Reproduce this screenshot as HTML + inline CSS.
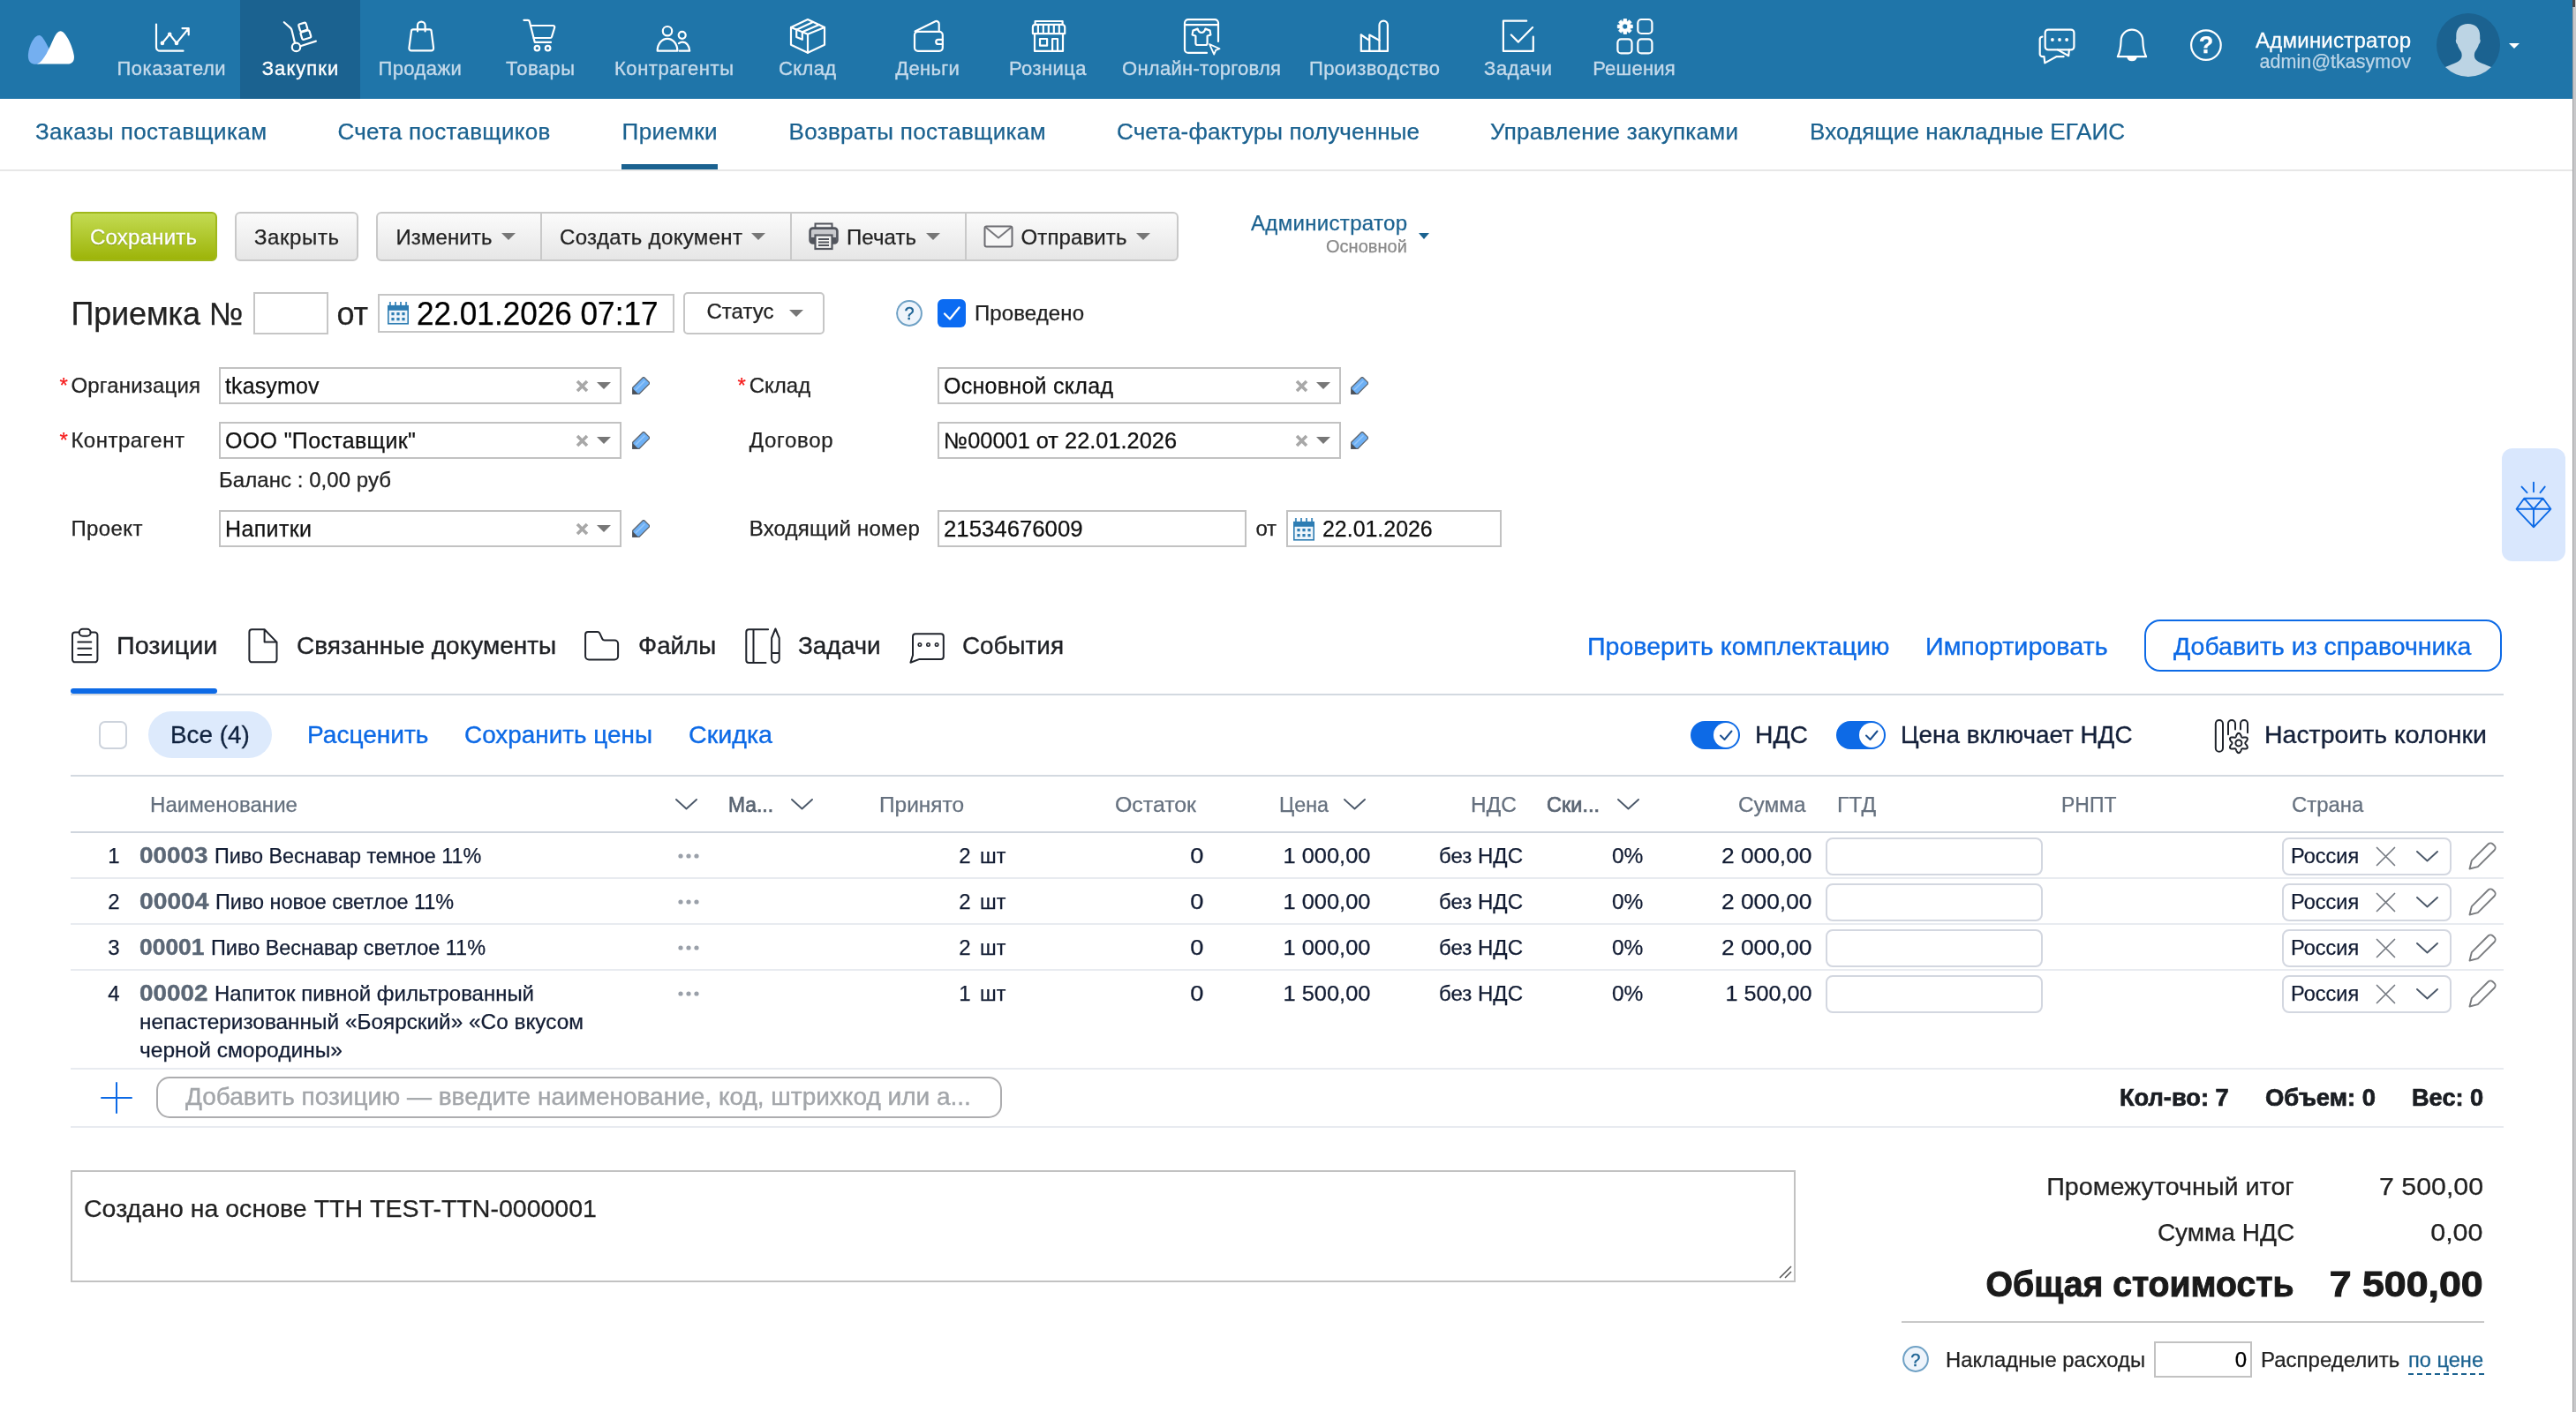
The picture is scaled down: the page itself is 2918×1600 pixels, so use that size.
<!DOCTYPE html>
<html lang="ru"><head><meta charset="utf-8"><title>Приемка</title><style>
html,body{margin:0;padding:0;background:#fff;}
body{width:2918px;height:1600px;position:relative;overflow:hidden;font-family:'Liberation Sans',sans-serif;will-change:transform;}
.t{position:absolute;white-space:nowrap;line-height:1;-webkit-text-stroke:0.25px currentColor;}
</style></head><body>
<div style="position:absolute;left:0px;top:0px;width:2914px;height:112px;background:#1f75a9;"></div>
<div style="position:absolute;left:272px;top:0px;width:136px;height:112px;background:#1b6290;"></div>
<div style="position:absolute;left:2914px;top:0px;width:4px;height:1600px;background:#c8c8ca;"></div>
<div style="position:absolute;left:2914px;top:0px;width:1px;height:1600px;background:#a2a2a4;"></div>
<div style="position:absolute;left:2914px;top:0px;width:3px;height:8px;background:#4a4a4c;"></div>
<svg style="position:absolute;left:0px;top:0px;" width="120" height="112" viewBox="0 0 120 112" fill="none"><path d="M44.400 39.900C47.500 39.900 50.500 45.500 55.300 54.700L56 60L44 72.600C36 73.800 31.500 70.500 31.900 62.400C32.500 52 38.500 39.900 44.400 39.900Z" fill="#74aff0"/><path d="M42 72.600C50 69.500 56 54 60.800 43.700C63.500 38 66 35.200 68.600 35.200C74 35.200 82.500 52 83.900 63.200C84.500 69.500 81.500 72.600 76.500 72.600Z" fill="#fff"/></svg>
<span class="t" style="top:67.0px;font-size:22px;color:#c5daeb;letter-spacing:0.51px;left:132.5px;-webkit-text-stroke:0.35px currentColor;">Показатели</span>
<span class="t" style="top:67.0px;font-size:22px;color:#fff;letter-spacing:1.04px;left:296.8px;-webkit-text-stroke:0.35px currentColor;">Закупки</span>
<span class="t" style="top:67.0px;font-size:22px;color:#c5daeb;letter-spacing:0.43px;left:428.4px;-webkit-text-stroke:0.35px currentColor;">Продажи</span>
<span class="t" style="top:67.0px;font-size:22px;color:#c5daeb;letter-spacing:0.46px;left:573.0px;-webkit-text-stroke:0.35px currentColor;">Товары</span>
<span class="t" style="top:67.0px;font-size:22px;color:#c5daeb;letter-spacing:0.54px;left:696.0px;-webkit-text-stroke:0.35px currentColor;">Контрагенты</span>
<span class="t" style="top:67.0px;font-size:22px;color:#c5daeb;letter-spacing:0.33px;left:882.1px;-webkit-text-stroke:0.35px currentColor;">Склад</span>
<span class="t" style="top:67.0px;font-size:22px;color:#c5daeb;letter-spacing:0.31px;left:1014.2px;-webkit-text-stroke:0.35px currentColor;">Деньги</span>
<span class="t" style="top:67.0px;font-size:22px;color:#c5daeb;letter-spacing:0.42px;left:1142.9px;-webkit-text-stroke:0.35px currentColor;">Розница</span>
<span class="t" style="top:67.0px;font-size:22px;color:#c5daeb;letter-spacing:0.28px;left:1271.0px;-webkit-text-stroke:0.35px currentColor;">Онлайн-торговля</span>
<span class="t" style="top:67.0px;font-size:22px;color:#c5daeb;letter-spacing:0.41px;left:1483.0px;-webkit-text-stroke:0.35px currentColor;">Производство</span>
<span class="t" style="top:67.0px;font-size:22px;color:#c5daeb;letter-spacing:0.62px;left:1681.0px;-webkit-text-stroke:0.35px currentColor;">Задачи</span>
<span class="t" style="top:67.0px;font-size:22px;color:#c5daeb;letter-spacing:0.22px;left:1804.2px;-webkit-text-stroke:0.35px currentColor;">Решения</span>
<span class="t" style="top:33.7px;font-size:24px;color:#fff;letter-spacing:0.24px;left:2555.0px;-webkit-text-stroke:0.3px #fff;">Администратор</span>
<span class="t" style="top:60.0px;font-size:21.5px;color:#bdd6e8;letter-spacing:0.02px;right:187.0px;">admin@tkasymov</span>
<svg style="position:absolute;left:2760px;top:15px;" width="72" height="72" viewBox="0 0 72 72" fill="none"><defs><clipPath id="avc"><circle cx="36" cy="36" r="36"/></clipPath></defs><circle cx="36" cy="36" r="36" fill="#1b6290"/><g clip-path="url(#avc)" fill="#bcd4e4"><path d="M35.600 11.900C27.500 11.900 22.300 17 22.300 25L22.300 29.500C21.400 30 21.700 33.600 23.500 35C24.500 39 26.500 41.500 28 44C29 47 29 50 27 52.500C24 56 17 58 8 61.800L8 76L64 76L64 61.800C55 58 47.500 56 44.500 52.500C42.500 50 42.500 47 43.500 44C45 41.500 47 39 48 35C49.800 33.600 50.100 30 49.200 29.500L49.200 25C49.200 17 44 11.900 35.600 11.900Z"/></g></svg>
<svg style="position:absolute;left:2842px;top:49px;" width="12" height="6" viewBox="0 0 12 6" fill="none"><path d="M0 0h12L6 6z" fill="#fff"/></svg>
<div style="position:absolute;left:0px;top:192px;width:2914px;height:2px;background:#e7e7e7;"></div>
<span class="t" style="top:136.4px;font-size:26px;color:#1b6290;letter-spacing:0.37px;left:40.0px;">Заказы поставщикам</span>
<span class="t" style="top:136.4px;font-size:26px;color:#1b6290;letter-spacing:0.30px;left:382.4px;">Счета поставщиков</span>
<span class="t" style="top:136.4px;font-size:26px;color:#1b6290;letter-spacing:0.35px;left:704.6px;">Приемки</span>
<span class="t" style="top:136.4px;font-size:26px;color:#1b6290;letter-spacing:0.31px;left:893.6px;">Возвраты поставщикам</span>
<span class="t" style="top:136.4px;font-size:26px;color:#1b6290;letter-spacing:0.17px;left:1265.0px;">Счета-фактуры полученные</span>
<span class="t" style="top:136.4px;font-size:26px;color:#1b6290;letter-spacing:0.28px;left:1688.0px;">Управление закупками</span>
<span class="t" style="top:136.4px;font-size:26px;color:#1b6290;letter-spacing:0.09px;left:2050.0px;">Входящие накладные ЕГАИС</span>
<div style="position:absolute;left:704px;top:186px;width:109px;height:6px;background:#1b6290;"></div>
<div style="position:absolute;left:80px;top:240px;width:166px;height:56px;background:linear-gradient(#c3db52,#9db409);border:2px solid #a0b81c;box-sizing:border-box;border-radius:6px;"></div>
<span class="t" style="top:256.9px;font-size:24px;color:#fff;letter-spacing:0.22px;left:102.0px;text-shadow:0 1px 1px rgba(90,110,0,.55);-webkit-text-stroke:0.3px #fff;">Сохранить</span>
<div style="position:absolute;left:266px;top:240px;width:140px;height:56px;background:linear-gradient(#fbfbfb,#e6e6e6);border:2px solid #c9c9c9;box-sizing:border-box;border-radius:6px;"></div>
<span class="t" style="top:256.9px;font-size:24px;color:#222;letter-spacing:0.59px;left:288.0px;">Закрыть</span>
<div style="position:absolute;left:426px;top:240px;width:909px;height:56px;background:linear-gradient(#fbfbfb,#e6e6e6);border:2px solid #c9c9c9;box-sizing:border-box;border-radius:6px;"></div>
<div style="position:absolute;left:612px;top:242px;width:2px;height:52px;background:#c9c9c9;"></div>
<div style="position:absolute;left:895px;top:242px;width:2px;height:52px;background:#c9c9c9;"></div>
<div style="position:absolute;left:1093px;top:242px;width:2px;height:52px;background:#c9c9c9;"></div>
<span class="t" style="top:256.9px;font-size:24px;color:#222;letter-spacing:0.10px;left:448.5px;">Изменить</span>
<svg style="position:absolute;left:568px;top:264px;" width="16" height="8" viewBox="0 0 16 8" fill="none"><path d="M0 0h16L8.0 8z" fill="#777"/></svg>
<span class="t" style="top:256.9px;font-size:24px;color:#222;letter-spacing:0.34px;left:634.0px;">Создать документ</span>
<svg style="position:absolute;left:851px;top:264px;" width="16" height="8" viewBox="0 0 16 8" fill="none"><path d="M0 0h16L8.0 8z" fill="#777"/></svg>
<span class="t" style="top:256.9px;font-size:24px;color:#222;letter-spacing:0.07px;left:959.0px;">Печать</span>
<svg style="position:absolute;left:1049px;top:264px;" width="16" height="8" viewBox="0 0 16 8" fill="none"><path d="M0 0h16L8.0 8z" fill="#777"/></svg>
<span class="t" style="top:256.9px;font-size:24px;color:#222;letter-spacing:0.12px;left:1156.5px;">Отправить</span>
<svg style="position:absolute;left:1287px;top:264px;" width="16" height="8" viewBox="0 0 16 8" fill="none"><path d="M0 0h16L8.0 8z" fill="#777"/></svg>
<span class="t" style="top:240.7px;font-size:24px;color:#1b6290;letter-spacing:0.32px;left:1417.0px;">Администратор</span>
<span class="t" style="top:269.1px;font-size:20px;color:#8a8a8a;letter-spacing:0.04px;right:1324.0px;">Основной</span>
<svg style="position:absolute;left:1607px;top:264px;" width="12" height="7" viewBox="0 0 12 7" fill="none"><path d="M0 0h12L6 7z" fill="#1b6290"/></svg>
<span class="t" style="top:338.0px;font-size:36px;color:#222;letter-spacing:-0.12px;left:80.4px;">Приемка №</span>
<div style="position:absolute;left:287px;top:331px;width:85px;height:48px;border:2px solid #c6c6c6;box-sizing:border-box;background:#fff;"></div>
<span class="t" style="top:338.0px;font-size:36px;color:#222;letter-spacing:-0.22px;left:381.6px;">от</span>
<div style="position:absolute;left:428px;top:333px;width:336px;height:44px;border:2px solid #c6c6c6;box-sizing:border-box;background:#fff;"></div>
<span class="t" style="top:337.2px;font-size:37px;color:#000;left:472.4px;transform:scaleX(0.9494);transform-origin:0 0;">22.01.2026 07:17</span>
<div style="position:absolute;left:774px;top:331px;width:160px;height:48px;border:2px solid #c6c6c6;box-sizing:border-box;background:#fff;border-radius:5px;"></div>
<span class="t" style="top:341.2px;font-size:24px;color:#222;letter-spacing:0.03px;left:800.5px;">Статус</span>
<svg style="position:absolute;left:894px;top:351px;" width="16" height="8" viewBox="0 0 16 8" fill="none"><path d="M0 0h16L8.0 8z" fill="#777"/></svg>
<div style="position:absolute;left:1062px;top:339px;width:32px;height:32px;background:#0b6bf2;border-radius:6px;"></div>
<svg style="position:absolute;left:1062px;top:339px;" width="32" height="32" viewBox="0 0 32 32" fill="none"><path d="M8 16.5l6 6L24.5 9.5" stroke="#fff" stroke-width="2.3" stroke-linecap="round" stroke-linejoin="round"/></svg>
<span class="t" style="top:342.9px;font-size:24px;color:#222;letter-spacing:0.10px;left:1104.0px;">Проведено</span>
<span class="t" style="top:425.3px;font-size:24px;color:#f61b1b;left:67.6px;">*</span>
<span class="t" style="top:425.1px;font-size:24px;color:#222;letter-spacing:0.19px;left:80.4px;">Организация</span>
<span class="t" style="top:487.3px;font-size:24px;color:#f61b1b;left:67.6px;">*</span>
<span class="t" style="top:487.1px;font-size:24px;color:#222;letter-spacing:0.49px;left:80.4px;">Контрагент</span>
<span class="t" style="top:587.2px;font-size:24px;color:#222;letter-spacing:0.39px;left:80.4px;">Проект</span>
<div style="position:absolute;left:248px;top:416px;width:456px;height:42px;border:2px solid #c2c2c2;box-sizing:border-box;background:#fff;"></div>
<span class="t" style="top:425.0px;font-size:25px;color:#111;letter-spacing:0.13px;left:255.0px;">tkasymov</span>
<svg style="position:absolute;left:651.5px;top:429.5px;" width="15" height="15" viewBox="0 0 15 15" fill="none"><path d="M2 2l11 11M13 2L2 13" stroke="#a8a8a8" stroke-width="3.6"/></svg>
<svg style="position:absolute;left:676px;top:433px;" width="16" height="8" viewBox="0 0 16 8" fill="none"><path d="M0 0h16L8 8z" fill="#777"/></svg>
<div style="position:absolute;left:248px;top:478px;width:456px;height:42px;border:2px solid #c2c2c2;box-sizing:border-box;background:#fff;"></div>
<span class="t" style="top:487.0px;font-size:25px;color:#111;letter-spacing:0.34px;left:255.0px;">ООО &quot;Поставщик&quot;</span>
<svg style="position:absolute;left:651.5px;top:491.5px;" width="15" height="15" viewBox="0 0 15 15" fill="none"><path d="M2 2l11 11M13 2L2 13" stroke="#a8a8a8" stroke-width="3.6"/></svg>
<svg style="position:absolute;left:676px;top:495px;" width="16" height="8" viewBox="0 0 16 8" fill="none"><path d="M0 0h16L8 8z" fill="#777"/></svg>
<div style="position:absolute;left:248px;top:578px;width:456px;height:42px;border:2px solid #c2c2c2;box-sizing:border-box;background:#fff;"></div>
<span class="t" style="top:587.0px;font-size:25px;color:#111;letter-spacing:0.36px;left:255.0px;">Напитки</span>
<svg style="position:absolute;left:651.5px;top:591.5px;" width="15" height="15" viewBox="0 0 15 15" fill="none"><path d="M2 2l11 11M13 2L2 13" stroke="#a8a8a8" stroke-width="3.6"/></svg>
<svg style="position:absolute;left:676px;top:595px;" width="16" height="8" viewBox="0 0 16 8" fill="none"><path d="M0 0h16L8 8z" fill="#777"/></svg>
<span class="t" style="top:532.3px;font-size:24px;color:#222;letter-spacing:0.05px;left:248.0px;">Баланс : 0,00 руб</span>
<span class="t" style="top:425.3px;font-size:24px;color:#f61b1b;left:835.6px;">*</span>
<span class="t" style="top:425.1px;font-size:24px;color:#222;letter-spacing:0.01px;left:848.7px;">Склад</span>
<span class="t" style="top:487.1px;font-size:24px;color:#222;letter-spacing:0.73px;left:848.7px;">Договор</span>
<span class="t" style="top:587.2px;font-size:24px;color:#222;letter-spacing:0.21px;left:848.7px;">Входящий номер</span>
<div style="position:absolute;left:1062px;top:416px;width:457px;height:42px;border:2px solid #c2c2c2;box-sizing:border-box;background:#fff;"></div>
<span class="t" style="top:425.0px;font-size:25px;color:#111;letter-spacing:0.28px;left:1069.0px;">Основной склад</span>
<svg style="position:absolute;left:1466.5px;top:429.5px;" width="15" height="15" viewBox="0 0 15 15" fill="none"><path d="M2 2l11 11M13 2L2 13" stroke="#a8a8a8" stroke-width="3.6"/></svg>
<svg style="position:absolute;left:1491px;top:433px;" width="16" height="8" viewBox="0 0 16 8" fill="none"><path d="M0 0h16L8 8z" fill="#777"/></svg>
<div style="position:absolute;left:1062px;top:478px;width:457px;height:42px;border:2px solid #c2c2c2;box-sizing:border-box;background:#fff;"></div>
<span class="t" style="top:487.0px;font-size:25px;color:#111;left:1069.0px;transform:scaleX(1.0148);transform-origin:0 0;">№00001 от 22.01.2026</span>
<svg style="position:absolute;left:1466.5px;top:491.5px;" width="15" height="15" viewBox="0 0 15 15" fill="none"><path d="M2 2l11 11M13 2L2 13" stroke="#a8a8a8" stroke-width="3.6"/></svg>
<svg style="position:absolute;left:1491px;top:495px;" width="16" height="8" viewBox="0 0 16 8" fill="none"><path d="M0 0h16L8 8z" fill="#777"/></svg>
<div style="position:absolute;left:1062px;top:578px;width:350px;height:42px;border:2px solid #c2c2c2;box-sizing:border-box;background:#fff;"></div>
<span class="t" style="top:587.0px;font-size:25px;color:#111;left:1069.4px;transform:scaleX(1.0304);transform-origin:0 0;">21534676009</span>
<span class="t" style="top:587.2px;font-size:24px;color:#222;letter-spacing:-0.31px;left:1422.5px;">от</span>
<div style="position:absolute;left:1457px;top:578px;width:244px;height:42px;border:2px solid #c2c2c2;box-sizing:border-box;background:#fff;"></div>
<span class="t" style="top:587.0px;font-size:25px;color:#111;left:1497.7px;transform:scaleX(0.9966);transform-origin:0 0;">22.01.2026</span>
<div style="position:absolute;left:80px;top:786px;width:2756px;height:2px;background:#d3d9e0;"></div>
<div style="position:absolute;left:80px;top:780px;width:166px;height:6px;background:#0d6ae6;border-radius:3px;"></div>
<span class="t" style="top:717.9px;font-size:28px;color:#1f2125;left:132.0px;transform:scaleX(1.0280);transform-origin:0 0;-webkit-text-stroke:0.35px currentColor;">Позиции</span>
<span class="t" style="top:717.9px;font-size:28px;color:#1f2125;left:335.6px;transform:scaleX(1.0001);transform-origin:0 0;-webkit-text-stroke:0.35px currentColor;">Связанные документы</span>
<span class="t" style="top:717.9px;font-size:28px;color:#1f2125;left:722.7px;transform:scaleX(0.9925);transform-origin:0 0;-webkit-text-stroke:0.35px currentColor;">Файлы</span>
<span class="t" style="top:717.9px;font-size:28px;color:#1f2125;left:904.0px;transform:scaleX(0.9966);transform-origin:0 0;-webkit-text-stroke:0.35px currentColor;">Задачи</span>
<span class="t" style="top:717.9px;font-size:28px;color:#1f2125;left:1090.0px;transform:scaleX(0.9949);transform-origin:0 0;-webkit-text-stroke:0.35px currentColor;">События</span>
<span class="t" style="top:718.6px;font-size:28px;color:#0d6ae6;left:1798.3px;transform:scaleX(1.0203);transform-origin:0 0;-webkit-text-stroke:0.35px currentColor;">Проверить комплектацию</span>
<span class="t" style="top:718.6px;font-size:28px;color:#0d6ae6;left:2181.3px;transform:scaleX(1.0252);transform-origin:0 0;-webkit-text-stroke:0.35px currentColor;">Импортировать</span>
<div style="position:absolute;left:2429px;top:702px;width:405px;height:59px;border:2px solid #0d6ae6;border-radius:18px;box-sizing:border-box;"></div>
<span class="t" style="top:718.6px;font-size:28px;color:#0d6ae6;left:2462.0px;transform:scaleX(1.0168);transform-origin:0 0;-webkit-text-stroke:0.35px currentColor;">Добавить из справочника</span>
<div style="position:absolute;left:112px;top:817px;width:32px;height:32px;border:2px solid #cdd3dc;border-radius:7px;box-sizing:border-box;background:#fff;"></div>
<div style="position:absolute;left:168px;top:806px;width:140px;height:53px;background:#ddeafc;border-radius:27px;"></div>
<span class="t" style="top:818.9px;font-size:28px;color:#10233f;left:192.8px;transform:scaleX(0.9950);transform-origin:0 0;-webkit-text-stroke:0.35px currentColor;">Все (4)</span>
<span class="t" style="top:818.9px;font-size:28px;color:#0d6ae6;left:348.0px;transform:scaleX(1.0026);transform-origin:0 0;-webkit-text-stroke:0.35px currentColor;">Расценить</span>
<span class="t" style="top:818.9px;font-size:28px;color:#0d6ae6;left:526.0px;transform:scaleX(0.9962);transform-origin:0 0;-webkit-text-stroke:0.35px currentColor;">Сохранить цены</span>
<span class="t" style="top:818.9px;font-size:28px;color:#0d6ae6;left:779.7px;transform:scaleX(1.0227);transform-origin:0 0;-webkit-text-stroke:0.35px currentColor;">Скидка</span>
<div style="position:absolute;left:1915px;top:817px;width:56px;height:32px;background:#0d6ae6;border-radius:16px;"></div><div style="position:absolute;left:1941px;top:819px;width:28px;height:28px;background:#fff;border-radius:14px;"></div><svg style="position:absolute;left:1941px;top:819px;" width="28" height="28" viewBox="0 0 28 28" fill="none"><path d="M8 14.5l4.5 4.5L20.5 9.5" stroke="#1b4f8f" stroke-width="2" stroke-linecap="round" stroke-linejoin="round"/></svg>
<span class="t" style="top:819.1px;font-size:28px;color:#14203a;left:1987.5px;transform:scaleX(1.0100);transform-origin:0 0;-webkit-text-stroke:0.35px currentColor;">НДС</span>
<div style="position:absolute;left:2080px;top:817px;width:56px;height:32px;background:#0d6ae6;border-radius:16px;"></div><div style="position:absolute;left:2106px;top:819px;width:28px;height:28px;background:#fff;border-radius:14px;"></div><svg style="position:absolute;left:2106px;top:819px;" width="28" height="28" viewBox="0 0 28 28" fill="none"><path d="M8 14.5l4.5 4.5L20.5 9.5" stroke="#1b4f8f" stroke-width="2" stroke-linecap="round" stroke-linejoin="round"/></svg>
<span class="t" style="top:819.1px;font-size:28px;color:#14203a;left:2152.5px;transform:scaleX(0.9940);transform-origin:0 0;-webkit-text-stroke:0.35px currentColor;">Цена включает НДС</span>
<span class="t" style="top:819.1px;font-size:28px;color:#14203a;left:2565.0px;transform:scaleX(1.0165);transform-origin:0 0;-webkit-text-stroke:0.35px currentColor;">Настроить колонки</span>
<div style="position:absolute;left:80px;top:878px;width:2756px;height:2px;background:#d3d9e0;"></div>
<span class="t" style="top:900.9px;font-size:23px;color:#66717f;left:170.0px;transform:scaleX(1.0473);transform-origin:0 0;">Наименование</span>
<svg style="position:absolute;left:765px;top:905px;" width="25" height="13" viewBox="0 0 25 13" fill="none"><path d="M1 1l11.5 10.5L24 1" stroke="#4b5869" stroke-width="1.9" stroke-linecap="round" stroke-linejoin="round"/></svg>
<span class="t" style="top:900.9px;font-size:23px;color:#5a6573;left:824.6px;transform:scaleX(0.9924);transform-origin:0 0;-webkit-text-stroke:0.7px #5a6573;">Ма...</span>
<svg style="position:absolute;left:895.5px;top:905px;" width="25" height="13" viewBox="0 0 25 13" fill="none"><path d="M1 1l11.5 10.5L24 1" stroke="#4b5869" stroke-width="1.9" stroke-linecap="round" stroke-linejoin="round"/></svg>
<span class="t" style="top:900.9px;font-size:23px;color:#66717f;left:996.0px;transform:scaleX(1.0619);transform-origin:0 0;">Принято</span>
<span class="t" style="top:900.9px;font-size:23px;color:#66717f;left:1262.7px;transform:scaleX(1.0812);transform-origin:0 0;">Остаток</span>
<span class="t" style="top:900.9px;font-size:23px;color:#66717f;left:1449.0px;transform:scaleX(1.0124);transform-origin:0 0;">Цена</span>
<svg style="position:absolute;left:1521.5px;top:905px;" width="25" height="13" viewBox="0 0 25 13" fill="none"><path d="M1 1l11.5 10.5L24 1" stroke="#4b5869" stroke-width="1.9" stroke-linecap="round" stroke-linejoin="round"/></svg>
<span class="t" style="top:900.9px;font-size:23px;color:#66717f;left:1666.4px;transform:scaleX(1.0615);transform-origin:0 0;">НДС</span>
<span class="t" style="top:900.9px;font-size:23px;color:#5a6573;left:1752.4px;transform:scaleX(1.0221);transform-origin:0 0;-webkit-text-stroke:0.7px #5a6573;">Ски...</span>
<svg style="position:absolute;left:1832px;top:905px;" width="25" height="13" viewBox="0 0 25 13" fill="none"><path d="M1 1l11.5 10.5L24 1" stroke="#4b5869" stroke-width="1.9" stroke-linecap="round" stroke-linejoin="round"/></svg>
<span class="t" style="top:900.9px;font-size:23px;color:#66717f;left:1968.7px;transform:scaleX(1.0597);transform-origin:0 0;">Сумма</span>
<span class="t" style="top:900.9px;font-size:23px;color:#66717f;left:2080.6px;transform:scaleX(1.0695);transform-origin:0 0;">ГТД</span>
<span class="t" style="top:900.9px;font-size:23px;color:#66717f;left:2335.2px;transform:scaleX(0.9979);transform-origin:0 0;">РНПТ</span>
<span class="t" style="top:900.9px;font-size:23px;color:#66717f;left:2596.2px;transform:scaleX(1.0392);transform-origin:0 0;">Страна</span>
<div style="position:absolute;left:80px;top:942px;width:2756px;height:2px;background:#cfd5dd;"></div>
<span class="t" style="top:958.0px;font-size:24px;color:#121c33;right:2782.5px;">1</span>
<span class="t" style="top:957.1px;font-size:25px;color:#5b6776;font-weight:700;left:157.6px;transform:scaleX(1.1132);transform-origin:0 0;-webkit-text-stroke:0.4px #5b6776;">00003</span>
<span class="t" style="top:958.0px;font-size:24px;color:#121c33;left:242.6px;transform:scaleX(0.9742);transform-origin:0 0;">Пиво Веснавар темное 11%</span>
<svg style="position:absolute;left:768px;top:967.3px;" width="24" height="6" viewBox="0 0 24 6" fill="none"><circle cx="3" cy="3" r="2.6" fill="#9aa0a9"/><circle cx="12" cy="3" r="2.6" fill="#9aa0a9"/><circle cx="21" cy="3" r="2.6" fill="#9aa0a9"/></svg>
<span class="t" style="top:958.0px;font-size:24px;color:#121c33;right:1818.5px;">2</span>
<span class="t" style="top:958.0px;font-size:24px;color:#121c33;left:1109.7px;transform:scaleX(0.9686);transform-origin:0 0;">шт</span>
<span class="t" style="top:958.0px;font-size:24px;color:#121c33;right:1555.0px;transform:scaleX(1.1378);transform-origin:100% 0;">0</span>
<span class="t" style="top:958.0px;font-size:24px;color:#121c33;right:1366.0px;transform:scaleX(1.0597);transform-origin:100% 0;">1 000,00</span>
<span class="t" style="top:958.0px;font-size:24px;color:#121c33;left:1629.8px;transform:scaleX(1.0012);transform-origin:0 0;">без НДС</span>
<span class="t" style="top:958.0px;font-size:24px;color:#121c33;left:1826.0px;transform:scaleX(1.0205);transform-origin:0 0;">0%</span>
<span class="t" style="top:958.0px;font-size:24px;color:#121c33;right:865.7px;transform:scaleX(1.0972);transform-origin:100% 0;">2 000,00</span>
<div style="position:absolute;left:2067.5px;top:948.5px;width:246px;height:43px;border:2px solid #d3d7e0;border-radius:8px;box-sizing:border-box;background:#fff;"></div>
<div style="position:absolute;left:2584.5px;top:948.5px;width:192px;height:43px;border:2px solid #d3d7e0;border-radius:8px;box-sizing:border-box;background:#fff;"></div>
<span class="t" style="top:958.0px;font-size:24px;color:#121c33;left:2594.5px;transform:scaleX(0.9809);transform-origin:0 0;">Россия</span>
<svg style="position:absolute;left:2691px;top:959px;" width="23" height="23" viewBox="0 0 23 23" fill="none"><path d="M1.500 1.500l20 20M21.500 1.500l-20 20" stroke="#767b82" stroke-width="1.700" stroke-linecap="round"/></svg>
<svg style="position:absolute;left:2736.5px;top:964px;" width="25" height="13" viewBox="0 0 25 13" fill="none"><path d="M1 1l11.5 10.5L24 1" stroke="#4b5869" stroke-width="1.9" stroke-linecap="round" stroke-linejoin="round"/></svg>
<svg style="position:absolute;left:2795px;top:953px;" width="34" height="34" viewBox="0 0 34 34" fill="none"><path d="M2.500 31.500l2.300-9.300L23.500 3.500c1.500-1.500 3.800-1.500 5.300 0l1.700 1.700c1.500 1.500 1.500 3.800 0 5.300L11.800 29.200z" stroke="#7b7d80" stroke-width="1.900" stroke-linejoin="round" stroke-linecap="round"/></svg>
<div style="position:absolute;left:80px;top:994px;width:2756px;height:2px;background:#e8ebf0;"></div>
<span class="t" style="top:1010.0px;font-size:24px;color:#121c33;right:2782.5px;">2</span>
<span class="t" style="top:1009.1px;font-size:25px;color:#5b6776;font-weight:700;left:157.6px;transform:scaleX(1.1290);transform-origin:0 0;-webkit-text-stroke:0.4px #5b6776;">00004</span>
<span class="t" style="top:1010.0px;font-size:24px;color:#121c33;left:243.7px;transform:scaleX(0.9748);transform-origin:0 0;">Пиво новое светлое 11%</span>
<svg style="position:absolute;left:768px;top:1019.3px;" width="24" height="6" viewBox="0 0 24 6" fill="none"><circle cx="3" cy="3" r="2.6" fill="#9aa0a9"/><circle cx="12" cy="3" r="2.6" fill="#9aa0a9"/><circle cx="21" cy="3" r="2.6" fill="#9aa0a9"/></svg>
<span class="t" style="top:1010.0px;font-size:24px;color:#121c33;right:1818.5px;">2</span>
<span class="t" style="top:1010.0px;font-size:24px;color:#121c33;left:1109.7px;transform:scaleX(0.9686);transform-origin:0 0;">шт</span>
<span class="t" style="top:1010.0px;font-size:24px;color:#121c33;right:1555.0px;transform:scaleX(1.1378);transform-origin:100% 0;">0</span>
<span class="t" style="top:1010.0px;font-size:24px;color:#121c33;right:1366.0px;transform:scaleX(1.0597);transform-origin:100% 0;">1 000,00</span>
<span class="t" style="top:1010.0px;font-size:24px;color:#121c33;left:1629.8px;transform:scaleX(1.0012);transform-origin:0 0;">без НДС</span>
<span class="t" style="top:1010.0px;font-size:24px;color:#121c33;left:1826.0px;transform:scaleX(1.0205);transform-origin:0 0;">0%</span>
<span class="t" style="top:1010.0px;font-size:24px;color:#121c33;right:865.7px;transform:scaleX(1.0972);transform-origin:100% 0;">2 000,00</span>
<div style="position:absolute;left:2067.5px;top:1000.5px;width:246px;height:43px;border:2px solid #d3d7e0;border-radius:8px;box-sizing:border-box;background:#fff;"></div>
<div style="position:absolute;left:2584.5px;top:1000.5px;width:192px;height:43px;border:2px solid #d3d7e0;border-radius:8px;box-sizing:border-box;background:#fff;"></div>
<span class="t" style="top:1010.0px;font-size:24px;color:#121c33;left:2594.5px;transform:scaleX(0.9809);transform-origin:0 0;">Россия</span>
<svg style="position:absolute;left:2691px;top:1011px;" width="23" height="23" viewBox="0 0 23 23" fill="none"><path d="M1.500 1.500l20 20M21.500 1.500l-20 20" stroke="#767b82" stroke-width="1.700" stroke-linecap="round"/></svg>
<svg style="position:absolute;left:2736.5px;top:1016px;" width="25" height="13" viewBox="0 0 25 13" fill="none"><path d="M1 1l11.5 10.5L24 1" stroke="#4b5869" stroke-width="1.9" stroke-linecap="round" stroke-linejoin="round"/></svg>
<svg style="position:absolute;left:2795px;top:1005px;" width="34" height="34" viewBox="0 0 34 34" fill="none"><path d="M2.500 31.500l2.300-9.300L23.500 3.500c1.500-1.500 3.800-1.500 5.300 0l1.700 1.700c1.500 1.500 1.500 3.800 0 5.300L11.800 29.200z" stroke="#7b7d80" stroke-width="1.900" stroke-linejoin="round" stroke-linecap="round"/></svg>
<div style="position:absolute;left:80px;top:1046px;width:2756px;height:2px;background:#e8ebf0;"></div>
<span class="t" style="top:1062.0px;font-size:24px;color:#121c33;right:2782.5px;">3</span>
<span class="t" style="top:1061.1px;font-size:25px;color:#5b6776;font-weight:700;left:157.6px;transform:scaleX(1.0571);transform-origin:0 0;-webkit-text-stroke:0.4px #5b6776;">00001</span>
<span class="t" style="top:1062.0px;font-size:24px;color:#121c33;left:238.7px;transform:scaleX(0.9769);transform-origin:0 0;">Пиво Веснавар светлое 11%</span>
<svg style="position:absolute;left:768px;top:1071.3px;" width="24" height="6" viewBox="0 0 24 6" fill="none"><circle cx="3" cy="3" r="2.6" fill="#9aa0a9"/><circle cx="12" cy="3" r="2.6" fill="#9aa0a9"/><circle cx="21" cy="3" r="2.6" fill="#9aa0a9"/></svg>
<span class="t" style="top:1062.0px;font-size:24px;color:#121c33;right:1818.5px;">2</span>
<span class="t" style="top:1062.0px;font-size:24px;color:#121c33;left:1109.7px;transform:scaleX(0.9686);transform-origin:0 0;">шт</span>
<span class="t" style="top:1062.0px;font-size:24px;color:#121c33;right:1555.0px;transform:scaleX(1.1378);transform-origin:100% 0;">0</span>
<span class="t" style="top:1062.0px;font-size:24px;color:#121c33;right:1366.0px;transform:scaleX(1.0597);transform-origin:100% 0;">1 000,00</span>
<span class="t" style="top:1062.0px;font-size:24px;color:#121c33;left:1629.8px;transform:scaleX(1.0012);transform-origin:0 0;">без НДС</span>
<span class="t" style="top:1062.0px;font-size:24px;color:#121c33;left:1826.0px;transform:scaleX(1.0205);transform-origin:0 0;">0%</span>
<span class="t" style="top:1062.0px;font-size:24px;color:#121c33;right:865.7px;transform:scaleX(1.0972);transform-origin:100% 0;">2 000,00</span>
<div style="position:absolute;left:2067.5px;top:1052.5px;width:246px;height:43px;border:2px solid #d3d7e0;border-radius:8px;box-sizing:border-box;background:#fff;"></div>
<div style="position:absolute;left:2584.5px;top:1052.5px;width:192px;height:43px;border:2px solid #d3d7e0;border-radius:8px;box-sizing:border-box;background:#fff;"></div>
<span class="t" style="top:1062.0px;font-size:24px;color:#121c33;left:2594.5px;transform:scaleX(0.9809);transform-origin:0 0;">Россия</span>
<svg style="position:absolute;left:2691px;top:1063px;" width="23" height="23" viewBox="0 0 23 23" fill="none"><path d="M1.500 1.500l20 20M21.500 1.500l-20 20" stroke="#767b82" stroke-width="1.700" stroke-linecap="round"/></svg>
<svg style="position:absolute;left:2736.5px;top:1068px;" width="25" height="13" viewBox="0 0 25 13" fill="none"><path d="M1 1l11.5 10.5L24 1" stroke="#4b5869" stroke-width="1.9" stroke-linecap="round" stroke-linejoin="round"/></svg>
<svg style="position:absolute;left:2795px;top:1057px;" width="34" height="34" viewBox="0 0 34 34" fill="none"><path d="M2.500 31.500l2.300-9.300L23.500 3.500c1.500-1.500 3.800-1.500 5.300 0l1.700 1.700c1.500 1.500 1.500 3.800 0 5.300L11.800 29.200z" stroke="#7b7d80" stroke-width="1.900" stroke-linejoin="round" stroke-linecap="round"/></svg>
<div style="position:absolute;left:80px;top:1098px;width:2756px;height:2px;background:#e8ebf0;"></div>
<span class="t" style="top:1114.0px;font-size:24px;color:#121c33;right:2782.5px;">4</span>
<span class="t" style="top:1113.1px;font-size:25px;color:#5b6776;font-weight:700;left:157.6px;transform:scaleX(1.1132);transform-origin:0 0;-webkit-text-stroke:0.4px #5b6776;">00002</span>
<span class="t" style="top:1114.0px;font-size:24px;color:#121c33;left:242.6px;transform:scaleX(0.9983);transform-origin:0 0;">Напиток пивной фильтрованный</span>
<svg style="position:absolute;left:768px;top:1123.3px;" width="24" height="6" viewBox="0 0 24 6" fill="none"><circle cx="3" cy="3" r="2.6" fill="#9aa0a9"/><circle cx="12" cy="3" r="2.6" fill="#9aa0a9"/><circle cx="21" cy="3" r="2.6" fill="#9aa0a9"/></svg>
<span class="t" style="top:1114.0px;font-size:24px;color:#121c33;right:1818.5px;">1</span>
<span class="t" style="top:1114.0px;font-size:24px;color:#121c33;left:1109.7px;transform:scaleX(0.9686);transform-origin:0 0;">шт</span>
<span class="t" style="top:1114.0px;font-size:24px;color:#121c33;right:1555.0px;transform:scaleX(1.1378);transform-origin:100% 0;">0</span>
<span class="t" style="top:1114.0px;font-size:24px;color:#121c33;right:1366.0px;transform:scaleX(1.0597);transform-origin:100% 0;">1 500,00</span>
<span class="t" style="top:1114.0px;font-size:24px;color:#121c33;left:1629.8px;transform:scaleX(1.0012);transform-origin:0 0;">без НДС</span>
<span class="t" style="top:1114.0px;font-size:24px;color:#121c33;left:1826.0px;transform:scaleX(1.0205);transform-origin:0 0;">0%</span>
<span class="t" style="top:1114.0px;font-size:24px;color:#121c33;right:865.7px;transform:scaleX(1.0490);transform-origin:100% 0;">1 500,00</span>
<div style="position:absolute;left:2067.5px;top:1104.5px;width:246px;height:43px;border:2px solid #d3d7e0;border-radius:8px;box-sizing:border-box;background:#fff;"></div>
<div style="position:absolute;left:2584.5px;top:1104.5px;width:192px;height:43px;border:2px solid #d3d7e0;border-radius:8px;box-sizing:border-box;background:#fff;"></div>
<span class="t" style="top:1114.0px;font-size:24px;color:#121c33;left:2594.5px;transform:scaleX(0.9809);transform-origin:0 0;">Россия</span>
<svg style="position:absolute;left:2691px;top:1115px;" width="23" height="23" viewBox="0 0 23 23" fill="none"><path d="M1.500 1.500l20 20M21.500 1.500l-20 20" stroke="#767b82" stroke-width="1.700" stroke-linecap="round"/></svg>
<svg style="position:absolute;left:2736.5px;top:1120px;" width="25" height="13" viewBox="0 0 25 13" fill="none"><path d="M1 1l11.5 10.5L24 1" stroke="#4b5869" stroke-width="1.9" stroke-linecap="round" stroke-linejoin="round"/></svg>
<svg style="position:absolute;left:2795px;top:1109px;" width="34" height="34" viewBox="0 0 34 34" fill="none"><path d="M2.500 31.500l2.300-9.300L23.500 3.500c1.500-1.500 3.800-1.500 5.300 0l1.700 1.700c1.500 1.500 1.500 3.800 0 5.300L11.800 29.200z" stroke="#7b7d80" stroke-width="1.900" stroke-linejoin="round" stroke-linecap="round"/></svg>
<span class="t" style="top:1145.7px;font-size:24px;color:#121c33;left:157.6px;transform:scaleX(1.0147);transform-origin:0 0;">непастеризованный «Боярский» «Со вкусом</span>
<span class="t" style="top:1177.9px;font-size:24px;color:#121c33;left:157.6px;transform:scaleX(1.0215);transform-origin:0 0;">черной смородины»</span>
<div style="position:absolute;left:80px;top:1210px;width:2756px;height:2px;background:#e8ebf0;"></div>
<svg style="position:absolute;left:114px;top:1226px;" width="36" height="36" viewBox="0 0 36 36" fill="none"><path d="M18 1v34M1 18h34" stroke="#0d6ae6" stroke-width="2" stroke-linecap="round"/></svg>
<div style="position:absolute;left:177px;top:1220px;width:958px;height:47px;border:2px solid #adadaf;border-radius:15px;box-sizing:border-box;background:#fff;"></div>
<span class="t" style="top:1229.2px;font-size:28px;color:#a3a6aa;left:210.0px;transform:scaleX(1.0002);transform-origin:0 0;-webkit-text-stroke:0.4px #a3a6aa;">Добавить позицию — введите наименование, код, штрихкод или а...</span>
<span class="t" style="top:1230.7px;font-size:27px;color:#1a1d22;font-weight:700;left:2400.6px;transform:scaleX(1.0083);transform-origin:0 0;-webkit-text-stroke:0.7px #1a1d22;">Кол-во: 7</span>
<span class="t" style="top:1230.7px;font-size:27px;color:#1a1d22;font-weight:700;left:2565.6px;transform:scaleX(1.0150);transform-origin:0 0;-webkit-text-stroke:0.7px #1a1d22;">Объем: 0</span>
<span class="t" style="top:1230.7px;font-size:27px;color:#1a1d22;font-weight:700;left:2731.8px;transform:scaleX(1.0064);transform-origin:0 0;-webkit-text-stroke:0.7px #1a1d22;">Вес: 0</span>
<div style="position:absolute;left:80px;top:1276px;width:2756px;height:2px;background:#e8ebf0;"></div>
<div style="position:absolute;left:80px;top:1326px;width:1954px;height:127px;border:2px solid #c2c2c2;box-sizing:border-box;background:#fff;"></div>
<svg style="position:absolute;left:2014px;top:1433px;" width="16" height="16" viewBox="0 0 16 16" fill="none"><path d="M15 2L2 15M15 8l-7 7" stroke="#555" stroke-width="1.500"/></svg>
<span class="t" style="top:1357.1px;font-size:27px;color:#222;left:94.6px;transform:scaleX(1.0569);transform-origin:0 0;">Создано на основе ТТН TEST-TTN-0000001</span>
<span class="t" style="top:1330.7px;font-size:28px;color:#222;right:319.3px;transform:scaleX(1.0251);transform-origin:100% 0;">Промежуточный итог</span>
<span class="t" style="top:1330.7px;font-size:28px;color:#222;right:105.1px;transform:scaleX(1.0817);transform-origin:100% 0;">7 500,00</span>
<span class="t" style="top:1382.9px;font-size:28px;color:#222;right:319.3px;transform:scaleX(1.0008);transform-origin:100% 0;">Сумма НДС</span>
<span class="t" style="top:1382.9px;font-size:28px;color:#222;right:105.1px;transform:scaleX(1.0881);transform-origin:100% 0;">0,00</span>
<span class="t" style="top:1434.7px;font-size:40px;color:#1a1a1a;font-weight:700;right:319.3px;transform:scaleX(0.9790);transform-origin:100% 0;-webkit-text-stroke:1px #1a1a1a;">Общая стоимость</span>
<span class="t" style="top:1434.7px;font-size:40px;color:#1a1a1a;font-weight:700;right:105.1px;transform:scaleX(1.1175);transform-origin:100% 0;-webkit-text-stroke:1px #1a1a1a;">7 500,00</span>
<div style="position:absolute;left:2154px;top:1497px;width:660px;height:2px;background:#c8c8c8;"></div>
<span class="t" style="top:1528.5px;font-size:24px;color:#222;left:2204.3px;transform:scaleX(0.9920);transform-origin:0 0;">Накладные расходы</span>
<div style="position:absolute;left:2440px;top:1520px;width:111px;height:41px;border:2px solid #c2c2c2;box-sizing:border-box;background:#fff;"></div>
<span class="t" style="top:1529.2px;font-size:24px;color:#000;right:373.0px;">0</span>
<span class="t" style="top:1528.5px;font-size:24px;color:#222;left:2560.7px;transform:scaleX(1.0007);transform-origin:0 0;">Распределить</span>
<span class="t" style="top:1528.5px;font-size:24px;color:#1b6290;left:2728.0px;transform:scaleX(0.9834);transform-origin:0 0;">по цене</span>
<div style="position:absolute;left:2728px;top:1556px;width:86px;height:0px;border-top:2px dashed #1b6290;"></div>
<div style="position:absolute;left:2834px;top:508px;width:72px;height:128px;background:#d9e7fd;border-radius:12px;"></div>
<svg style="position:absolute;left:0px;top:0px;" width="2918" height="112" viewBox="0 0 2918 112" fill="none"><g stroke="#fff" stroke-width="2.200" stroke-linecap="round" stroke-linejoin="round"><path d="M177 27.500V53.500a4.200 4.200 0 0 0 4.200 4.200H207.500"/><path d="M183.900 48.900L192.200 38.800L200 48.900L213.700 32.100M206.500 32.100h7.200v7.400"/><g fill="#fff" stroke="none"><circle cx="183.900" cy="48.900" r="2.300"/><circle cx="192.200" cy="38.800" r="2.300"/><circle cx="200" cy="48.900" r="2.300"/></g><path d="M321.800 25.200L329 31.600q1.200 1.100 1.600 2.800L334 48.700"/><circle cx="335.500" cy="53.400" r="4.700"/><path d="M340.400 52.200L357.900 46.600"/><g transform="rotate(-17 343.300 30.700)"><rect x="339" y="26.400" width="8.600" height="8.600" rx="1.800"/></g><g transform="rotate(-17 346.400 39.600)"><rect x="341.200" y="35.200" width="10.400" height="8.800" rx="1.800"/></g><path d="M468 33.300h18.600a2 2 0 0 1 2 1.800l2.500 19.300a2.600 2.600 0 0 1-2.600 3H466a2.600 2.600 0 0 1-2.600-3l2.600-19.300a2 2 0 0 1 2-1.800z"/><path d="M473 35.500v-6.600a4.300 4.300 0 0 1 8.600 0v6.600"/><path d="M593.400 22.800h4.600a1.800 1.800 0 0 1 1.700 1.300L605.800 47.900H624"/><path d="M601 29h25.500a1.800 1.800 0 0 1 1.700 2.300L625 41.700a1.800 1.800 0 0 1-1.700 1.300H604.600"/><circle cx="608.400" cy="54.600" r="2.800"/><circle cx="620.600" cy="54.600" r="2.800"/><circle cx="756" cy="35.200" r="5.200"/><path d="M744.700 57.700c0-8 5-13.800 11.300-13.800s11.300 5.800 11.300 13.800z"/><circle cx="772.700" cy="39.800" r="4"/><path d="M769 49.200c1.200-1 2.600-1.500 4-1.500 4.400 0 8 4.200 8.200 10h-11.600"/><path d="M915 22L934 31V50.800L915 59.800L896 50.800V31z"/><path d="M896 31L915 38.800L934 31M915 38.800V59.800"/><path d="M902.200 33.700L920.900 24.900M908.800 36.200L927.900 27.900M902.200 33.700V41.900L908.800 44.800V36.200"/><rect x="1036" y="35.900" width="31.800" height="22" rx="3.800"/><path d="M1036.600 35.400L1059.400 24.300a3 3 0 0 1 4.300 2.700V35.900"/><path d="M1067.800 44.900h-5a2.550 2.550 0 0 0 0 5.100h5"/><path d="M1172.600 27.600V24h31V27.600"/><path d="M1172.900 27.800h30.300a3 3 0 0 1 3 3V38.100h-36.300V30.800a3 3 0 0 1 3-3z"/><path d="M1175.900 28v10M1181.800 28v10M1187.800 28v10M1193.800 28v10M1199.800 28v10"/><path d="M1172 38.100V57.900h32V38.100"/><rect x="1178" y="44" width="8.100" height="7.700"/><path d="M1192.100 57.900V44h5.900V57.900"/><path d="M1367 59.900H1346a4 4 0 0 1-4-4V26.100a4 4 0 0 1 4-4h30a4 4 0 0 1 4 4V47"/><path d="M1342 28.200h38"/><path d="M1356.600 32.600c.7 2.800 2.300 4.400 4.400 4.400s3.700-1.600 4.400-4.400l5.200 2 .8 4.800-3.800 1.300v8.300a2 2 0 0 1-2 2h-9.200a2 2 0 0 1-2-2V40.700l-3.800-1.300.8-4.800z"/><path d="M1370.100 50.100L1381.600 55.200L1377.200 56.900L1375.200 61.600z" stroke-width="1.800"/><path d="M1541.800 39.500V57.900H1571.900V28.300a4.700 4.700 0 0 0-9.400 0V57.900"/><path d="M1541.800 39.500L1551.300 45.800V57.900M1551.300 45.800V39.500L1562.500 45.800"/><path d="M1729.200 23.700H1702.900V57.900H1736.800V41.700"/><path d="M1711.800 39.500L1719.900 47.600L1736.100 31.100"/><rect x="1855.300" y="22" width="16.100" height="16" rx="4"/><rect x="1832.400" y="44.400" width="16.100" height="16" rx="4"/><rect x="1855.300" y="44.400" width="16.100" height="16" rx="4"/><path d="M1846.8 28.1L1849.3 28.3L1849.3 31.7L1846.8 31.9L1846.4 32.9L1848.1 34.8L1845.6 37.3L1843.7 35.6L1842.7 36.0L1842.5 38.5L1839.1 38.5L1838.9 36.0L1837.9 35.6L1836.0 37.3L1833.5 34.8L1835.2 32.9L1834.8 31.9L1832.3 31.7L1832.3 28.3L1834.8 28.1L1835.2 27.1L1833.5 25.2L1836.0 22.7L1837.9 24.4L1838.9 24.0L1839.1 21.5L1842.5 21.5L1842.7 24.0L1843.7 24.4L1845.6 22.7L1848.1 25.2L1846.4 27.1z M1843.9 30a3.100 3.100 0 1 0 -6.200 0a3.100 3.100 0 1 0 6.200 0z" fill="#fff" stroke="#fff" stroke-width="0.800" fill-rule="evenodd"/><rect x="2316.700" y="33.600" width="32.700" height="22.800" rx="3.500"/><path d="M2330.800 56.400L2343.200 63.200L2343.900 56.400" /><g fill="#fff" stroke="none"><circle cx="2324.900" cy="45" r="1.900"/><circle cx="2333" cy="45" r="1.900"/><circle cx="2341.100" cy="45" r="1.900"/></g><path d="M2313.400 41.600a3 3 0 0 0-2.700 3V61.200a3 3 0 0 0 3 3h1.800l.8 7.200L2329.300 64.200h8.300"/><path d="M2398.800 64.200c2.400-4.400 3.500-9.400 3.800-18.200a12.350 12.350 0 0 1 24.700 0c.3 8.800 1.400 13.800 3.800 18.200z"/><path d="M2410.300 64.800a4.800 4.300 0 0 0 9.400 0z" fill="#fff"/><circle cx="2498.900" cy="51.100" r="16.800"/></g></svg>
<span class="t" style="top:37.6px;font-size:27px;color:#fff;font-weight:700;left:2498.9px;transform:translateX(-50%);margin-left:0.00px;">?</span>
<svg style="position:absolute;left:916px;top:252px;" width="34" height="32" viewBox="0 0 34 32" fill="none"><rect x="7.500" y="1.500" width="19" height="6" fill="#f4f4f4" stroke="#52555d" stroke-width="2"/><rect x="1.600" y="6.600" width="30.800" height="16.800" rx="3.200" fill="#c9cace" stroke="#52555d" stroke-width="2.600"/><rect x="3" y="17" width="5" height="6" fill="#52555d"/><rect x="26" y="17" width="5" height="6" fill="#52555d"/><rect x="7.500" y="14.500" width="19" height="15.500" fill="#f4f4f4" stroke="#52555d" stroke-width="2.200"/><path d="M11 19h12M11 22.500h12M11 26h12" stroke="#52555d" stroke-width="1.800"/></svg>
<svg style="position:absolute;left:1114px;top:255px;" width="34" height="26" viewBox="0 0 34 26" fill="none"><rect x="1.500" y="1.500" width="31" height="23" rx="2" fill="#f7f7f7" stroke="#6b6b70" stroke-width="2"/><path d="M2.500 2.500L17 14.500L31.500 2.500" stroke="#77777c" stroke-width="2" stroke-linejoin="round"/></svg>
<svg style="position:absolute;left:439px;top:342.3px;" width="24" height="26" viewBox="0 0 24 26" fill="none"><g fill="#2e7db3"><rect x="1.9" y="0" width="2" height="4.500" fill="#4f93c3"/><rect x="8" y="0" width="2" height="4.500" fill="#4f93c3"/><rect x="14" y="0" width="2" height="4.500" fill="#4f93c3"/><rect x="20.1" y="0" width="2" height="4.500" fill="#4f93c3"/><rect x="0" y="3.900" width="24" height="5.200"/><rect x="0.800" y="9" width="22.400" height="15.800" fill="#eef5fb" stroke="#2e7db3" stroke-width="1.600"/><rect x="4.4" y="12.1" width="3.200" height="3.200" rx="0.500"/><rect x="4.4" y="18.1" width="3.200" height="3.200" rx="0.500"/><rect x="10.4" y="12.1" width="3.200" height="3.200" rx="0.500"/><rect x="10.4" y="18.1" width="3.200" height="3.200" rx="0.500"/><rect x="16.4" y="12.1" width="3.200" height="3.200" rx="0.500"/><rect x="16.4" y="18.1" width="3.200" height="3.200" rx="0.500"/></g></svg>
<svg style="position:absolute;left:1465px;top:587px;" width="24" height="26" viewBox="0 0 24 26" fill="none"><g fill="#2e7db3"><rect x="1.9" y="0" width="2" height="4.500" fill="#4f93c3"/><rect x="8" y="0" width="2" height="4.500" fill="#4f93c3"/><rect x="14" y="0" width="2" height="4.500" fill="#4f93c3"/><rect x="20.1" y="0" width="2" height="4.500" fill="#4f93c3"/><rect x="0" y="3.900" width="24" height="5.200"/><rect x="0.800" y="9" width="22.400" height="15.800" fill="#eef5fb" stroke="#2e7db3" stroke-width="1.600"/><rect x="4.4" y="12.1" width="3.200" height="3.200" rx="0.500"/><rect x="4.4" y="18.1" width="3.200" height="3.200" rx="0.500"/><rect x="10.4" y="12.1" width="3.200" height="3.200" rx="0.500"/><rect x="10.4" y="18.1" width="3.200" height="3.200" rx="0.500"/><rect x="16.4" y="12.1" width="3.200" height="3.200" rx="0.500"/><rect x="16.4" y="18.1" width="3.200" height="3.200" rx="0.500"/></g></svg>
<svg style="position:absolute;left:1014px;top:339px;" width="32" height="32" viewBox="0 0 32 32" fill="none"><circle cx="16" cy="16" r="13.900" fill="#eef4fb" stroke="#6fa1c5" stroke-width="2"/></svg>
<span class="t" style="top:345.4px;font-size:20px;color:#1d6394;left:1030.0px;transform:translateX(-50%);margin-left:0.00px;-webkit-text-stroke:0.4px #1d6394;">?</span>
<svg style="position:absolute;left:2153.7px;top:1524.4px;" width="32" height="32" viewBox="0 0 32 32" fill="none"><circle cx="16" cy="16" r="13.900" fill="#eef4fb" stroke="#6fa1c5" stroke-width="2"/></svg>
<span class="t" style="top:1530.8px;font-size:20px;color:#1d6394;left:2169.7px;transform:translateX(-50%);margin-left:0.00px;-webkit-text-stroke:0.4px #1d6394;">?</span>
<svg style="position:absolute;left:715.7px;top:426.7px;" width="20.5" height="20.5" viewBox="0 0 20.5 20.5" fill="none"><path d="M0.700 19.500V12.300L11.800 1.200a1.800 1.800 0 0 1 2.500 0L19 5.900a1.800 1.800 0 0 1 0 2.500L7.900 19.500z" fill="#6db0f5" stroke="#5f656e" stroke-width="1.300" stroke-linejoin="round"/><path d="M0.700 19.500V13.200L7 19.500z" fill="#4b5058"/><path d="M4.500 14.500L14 5" stroke="#a8d2fb" stroke-width="1.600" stroke-linecap="round" opacity="0.7"/></svg>
<svg style="position:absolute;left:715.7px;top:488.7px;" width="20.5" height="20.5" viewBox="0 0 20.5 20.5" fill="none"><path d="M0.700 19.500V12.300L11.800 1.200a1.800 1.800 0 0 1 2.500 0L19 5.900a1.800 1.800 0 0 1 0 2.500L7.900 19.500z" fill="#6db0f5" stroke="#5f656e" stroke-width="1.300" stroke-linejoin="round"/><path d="M0.700 19.500V13.200L7 19.500z" fill="#4b5058"/><path d="M4.500 14.500L14 5" stroke="#a8d2fb" stroke-width="1.600" stroke-linecap="round" opacity="0.7"/></svg>
<svg style="position:absolute;left:715.7px;top:588.7px;" width="20.5" height="20.5" viewBox="0 0 20.5 20.5" fill="none"><path d="M0.700 19.500V12.300L11.800 1.200a1.800 1.800 0 0 1 2.500 0L19 5.900a1.800 1.800 0 0 1 0 2.500L7.900 19.500z" fill="#6db0f5" stroke="#5f656e" stroke-width="1.300" stroke-linejoin="round"/><path d="M0.700 19.500V13.200L7 19.500z" fill="#4b5058"/><path d="M4.500 14.500L14 5" stroke="#a8d2fb" stroke-width="1.600" stroke-linecap="round" opacity="0.7"/></svg>
<svg style="position:absolute;left:1529.7px;top:426.7px;" width="20.5" height="20.5" viewBox="0 0 20.5 20.5" fill="none"><path d="M0.700 19.500V12.300L11.800 1.200a1.800 1.800 0 0 1 2.500 0L19 5.900a1.800 1.800 0 0 1 0 2.500L7.900 19.500z" fill="#6db0f5" stroke="#5f656e" stroke-width="1.300" stroke-linejoin="round"/><path d="M0.700 19.500V13.200L7 19.500z" fill="#4b5058"/><path d="M4.500 14.500L14 5" stroke="#a8d2fb" stroke-width="1.600" stroke-linecap="round" opacity="0.7"/></svg>
<svg style="position:absolute;left:1529.7px;top:488.7px;" width="20.5" height="20.5" viewBox="0 0 20.5 20.5" fill="none"><path d="M0.700 19.500V12.300L11.800 1.200a1.800 1.800 0 0 1 2.500 0L19 5.900a1.800 1.800 0 0 1 0 2.500L7.900 19.500z" fill="#6db0f5" stroke="#5f656e" stroke-width="1.300" stroke-linejoin="round"/><path d="M0.700 19.500V13.200L7 19.500z" fill="#4b5058"/><path d="M4.500 14.500L14 5" stroke="#a8d2fb" stroke-width="1.600" stroke-linecap="round" opacity="0.7"/></svg>
<svg style="position:absolute;left:0px;top:700px;" width="1200" height="60" viewBox="0 700 1200 60" fill="none"><g stroke="#20242c" stroke-width="2" stroke-linecap="round" stroke-linejoin="round"><path d="M89.700 716.500H85a3 3 0 0 0-3 3V747.300a3 3 0 0 0 3 3h22.400a3 3 0 0 0 3-3V719.500a3 3 0 0 0-3-3H102.600"/><rect x="89.700" y="712.700" width="12.900" height="8.100" rx="4"/><path d="M88.300 727.600h15M88.300 734.700h15M88.300 741.900h15"/><path d="M299.600 713.300H285.400a3 3 0 0 0-3 3V747.300a3 3 0 0 0 3 3h25.100a3 3 0 0 0 3-3V727.600zM299.600 713.300V727.600H313.500"/><path d="M666.100 716.100H677a2.500 2.500 0 0 1 2.200 1.300L682.300 724a2.800 2.800 0 0 0 2.500 1.600H696.100a4 4 0 0 1 4 4V743.400a4 4 0 0 1-4 4H667.100a4 4 0 0 1-4-4V719.100a3 3 0 0 1 3-3z"/><path d="M870.100 713.300H848.300a3 3 0 0 0-3 3V747.900a3 3 0 0 0 3 3H867.500M853.500 713.300V750.900"/><path d="M874.100 723L878.400 712.500L882.700 723V746.600a4.300 4.300 0 0 1-8.600 0zM874.100 740.100h8.600"/><path d="M1034 742.500V721.200a3 3 0 0 1 3-3h28.800a3 3 0 0 1 3 3V743.900a3 3 0 0 1-3 3H1041.600L1031.400 750.700z"/><g stroke-width="1.600"><circle cx="1041.900" cy="730.500" r="1.700"/><circle cx="1051.500" cy="730.500" r="1.700"/><circle cx="1061.100" cy="730.500" r="1.700"/></g></g></svg>
<svg style="position:absolute;left:2500px;top:810px;" width="60" height="50" viewBox="2500 810 60 50" fill="none"><g stroke="#1f232b" stroke-width="2" stroke-linecap="round" stroke-linejoin="round"><rect x="2509.800" y="815.900" width="8.200" height="35.900" rx="4.100"/><path d="M2524 832.200V820a4 4 0 0 1 8 0V826.500"/><path d="M2538 826.500V820a4 4 0 0 1 8 0V830.200"/><path d="M2543.30 842.00L2543.38 842.39L2543.62 842.81L2543.98 843.28L2544.42 843.81L2544.88 844.41L2545.30 845.06L2545.62 845.73L2545.80 846.41L2545.80 847.04L2545.60 847.60L2545.22 848.05L2544.67 848.37L2544.00 848.56L2543.25 848.62L2542.48 848.58L2541.73 848.47L2541.05 848.36L2540.46 848.28L2539.98 848.28L2539.60 848.41L2539.30 848.68L2539.06 849.09L2538.83 849.64L2538.59 850.29L2538.31 850.98L2537.96 851.67L2537.53 852.29L2537.03 852.78L2536.48 853.09L2535.90 853.20L2535.32 853.09L2534.77 852.78L2534.27 852.29L2533.84 851.67L2533.49 850.98L2533.21 850.29L2532.97 849.64L2532.74 849.09L2532.50 848.68L2532.20 848.41L2531.82 848.28L2531.34 848.28L2530.75 848.36L2530.07 848.47L2529.32 848.58L2528.55 848.62L2527.80 848.56L2527.13 848.37L2526.58 848.05L2526.20 847.60L2526.00 847.04L2526.00 846.41L2526.18 845.73L2526.50 845.06L2526.92 844.41L2527.38 843.81L2527.82 843.28L2528.18 842.81L2528.42 842.39L2528.50 842.00L2528.42 841.61L2528.18 841.19L2527.82 840.72L2527.38 840.19L2526.92 839.59L2526.50 838.94L2526.18 838.27L2526.00 837.59L2526.00 836.96L2526.20 836.40L2526.58 835.95L2527.13 835.63L2527.80 835.44L2528.55 835.38L2529.32 835.42L2530.07 835.53L2530.75 835.64L2531.34 835.72L2531.82 835.72L2532.20 835.59L2532.50 835.32L2532.74 834.91L2532.97 834.36L2533.21 833.71L2533.49 833.02L2533.84 832.33L2534.27 831.71L2534.77 831.22L2535.32 830.91L2535.90 830.80L2536.48 830.91L2537.03 831.22L2537.53 831.71L2537.96 832.33L2538.31 833.02L2538.59 833.71L2538.83 834.36L2539.06 834.91L2539.30 835.32L2539.60 835.59L2539.98 835.72L2540.46 835.72L2541.05 835.64L2541.73 835.53L2542.48 835.42L2543.25 835.38L2544.00 835.44L2544.67 835.63L2545.22 835.95L2545.60 836.40L2545.80 836.96L2545.80 837.59L2545.62 838.27L2545.30 838.94L2544.88 839.59L2544.42 840.19L2543.98 840.72L2543.62 841.19L2543.38 841.61z"/><circle cx="2535.9" cy="842.0" r="3.500"/></g></svg>
<svg style="position:absolute;left:2834px;top:508px;" width="72" height="128" viewBox="2834 508 72 128" fill="none"><g stroke="#0d6ae6" stroke-width="1.900" stroke-linecap="round" stroke-linejoin="round"><path d="M2870 546.600V557.200M2856.500 551.600L2862.500 558.200M2882.700 551.600L2877.500 558.200"/><path d="M2859.300 564.700H2880.600L2889.400 576.800L2870 597.300L2850.600 576.800zM2850.600 576.800H2889.400M2859.300 564.700L2870 576.800L2880.600 564.700M2870 576.800V597.300"/></g></svg>
</body></html>
